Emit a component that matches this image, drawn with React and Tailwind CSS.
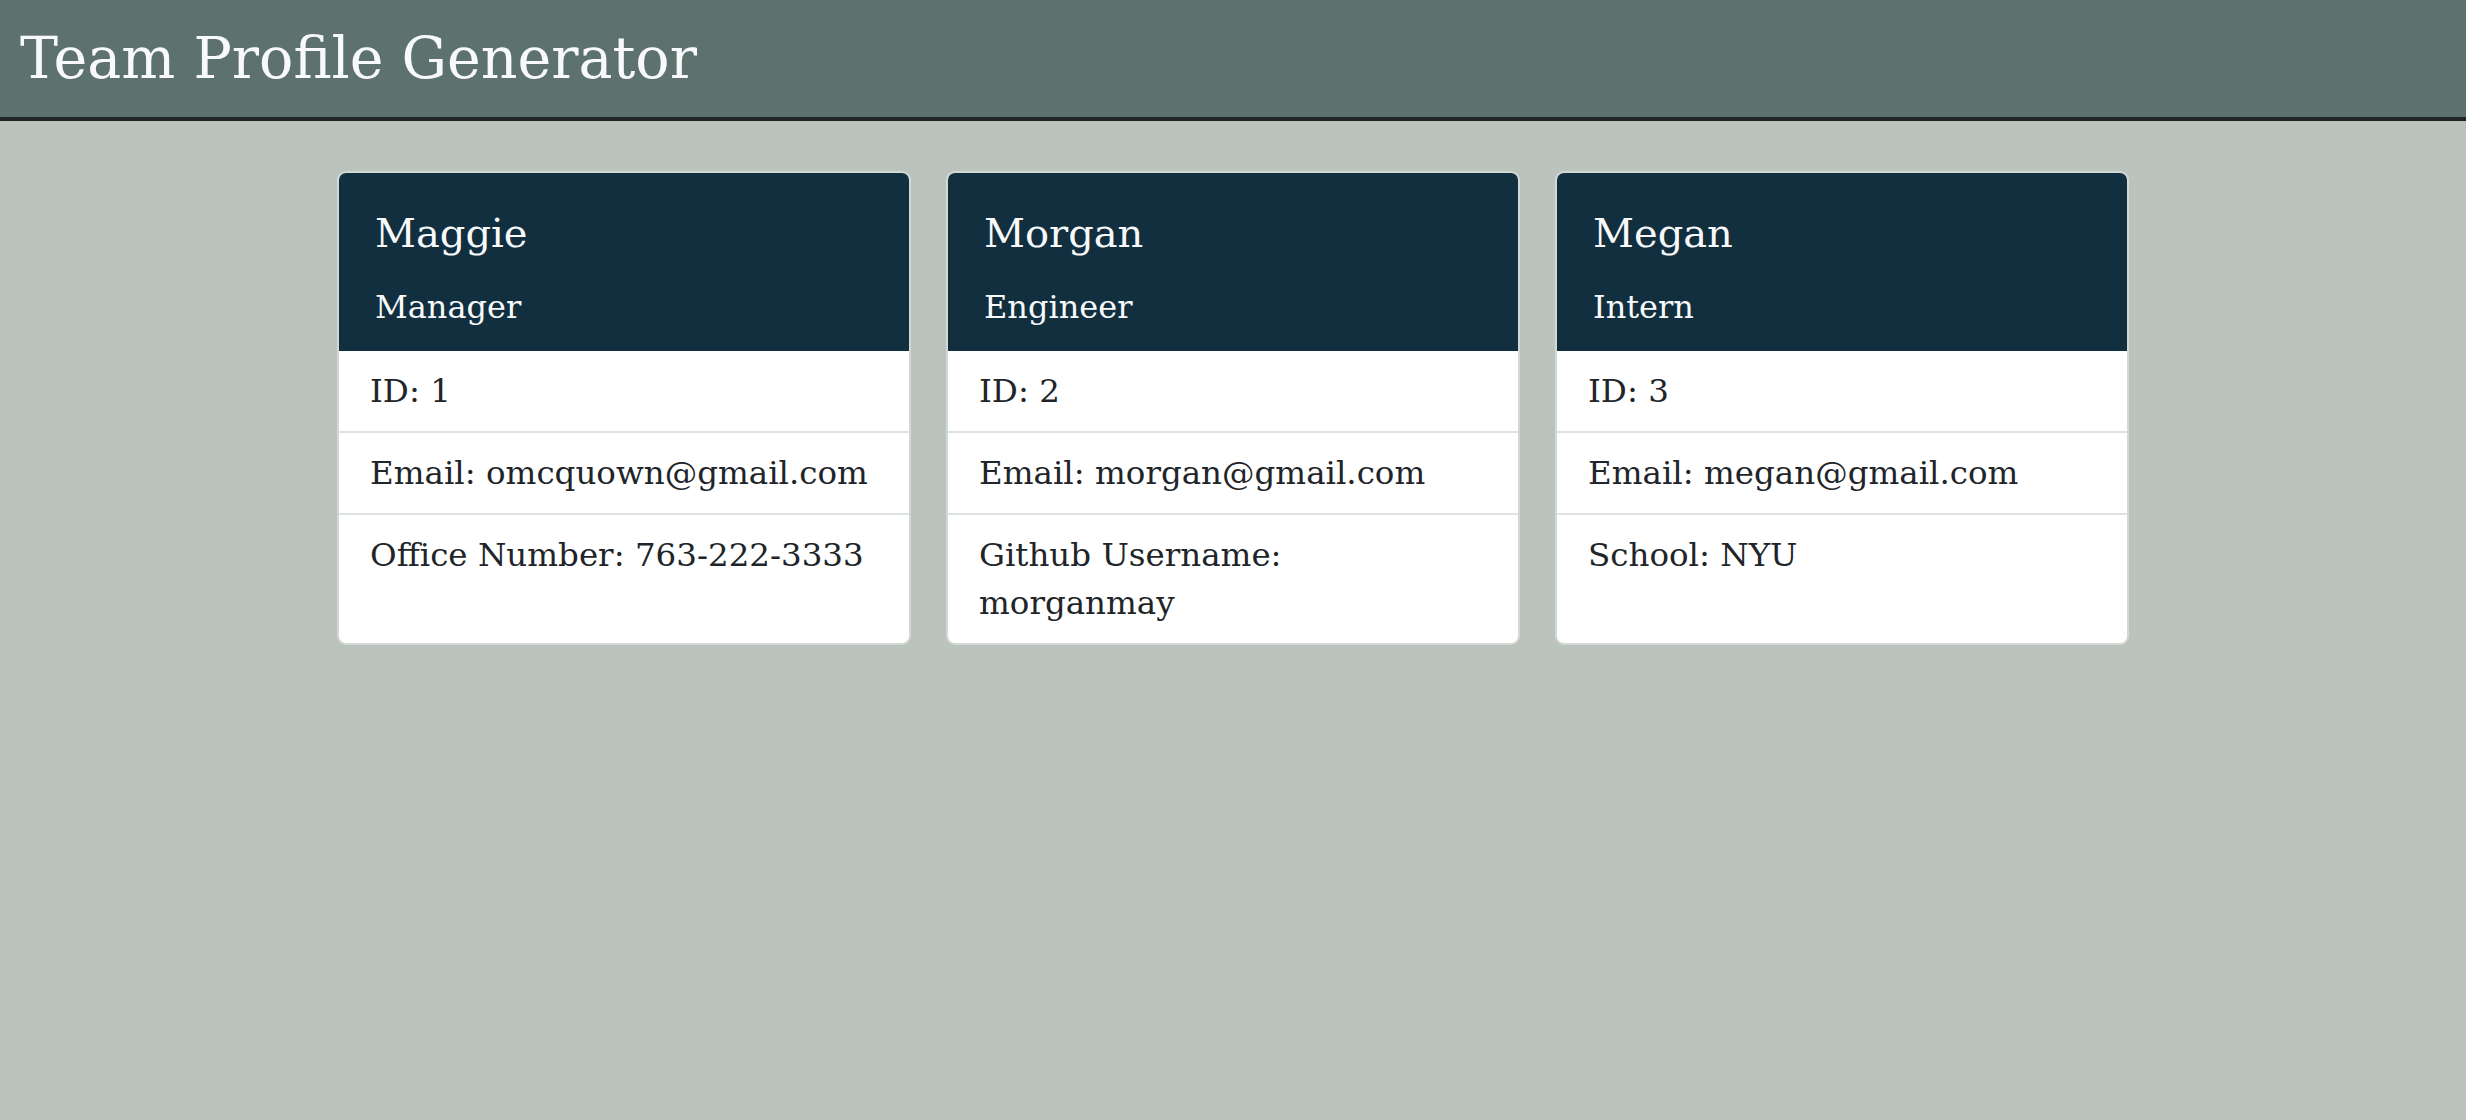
import React from 'react';

const team = [
  { name: 'Maggie', role: 'Manager', id: 1, email: 'omcquown@gmail.com', extra: ['Office Number: 763-222-3333'] },
  { name: 'Morgan', role: 'Engineer', id: 2, email: 'morgan@gmail.com', extra: ['Github Username:', 'morganmay'] },
  { name: 'Megan', role: 'Intern', id: 3, email: 'megan@gmail.com', extra: ['School: NYU'] },
];

function Card({ member }) {
  return (
    <div className="flex w-[574px] flex-col overflow-hidden rounded-[9px] border-2 border-[#d3d7d5] bg-white">
      <div className="-mx-[2px] -mt-[2px] border-2 border-b-0 border-[#23292c] bg-[#112f3e] px-[36px] pb-[20px] pt-[36px] text-[#f8f9fa]">
        <h2 className="text-[40px] leading-[48px]">{member.name}</h2>
        <h3 className="mt-[26px] text-[32px] leading-[48px]">{member.role}</h3>
      </div>
      <div className="flex flex-1 flex-col text-[32.5px] leading-[48px] text-[#212529]">
        <div className="border-b-2 border-[#dee2e6] px-[31px] py-[16px]">ID: {member.id}</div>
        <div className="border-b-2 border-[#dee2e6] px-[31px] py-[16px]">Email: {member.email}</div>
        <div className="flex-1 px-[31px] py-[16px]">
          {member.extra.map((line) => (
            <div key={line}>{line}</div>
          ))}
        </div>
      </div>
    </div>
  );
}

export default function App() {
  return (
    <div className="min-h-screen bg-[#bac4bc]" style={{ fontFamily: '"DejaVu Serif", serif' }}>
      <header className="h-[121px] border-b-4 border-[#212529] bg-[#5e726d] px-[20px] pt-[23px]">
        <h1 className="text-[57px] leading-[70px] text-[#f8f9fa]">Team Profile Generator</h1>
      </header>
      <main className="flex justify-center gap-[35px] pt-[50px]">
        {team.map((m) => (
          <Card key={m.id} member={m} />
        ))}
      </main>
    </div>
  );
}
